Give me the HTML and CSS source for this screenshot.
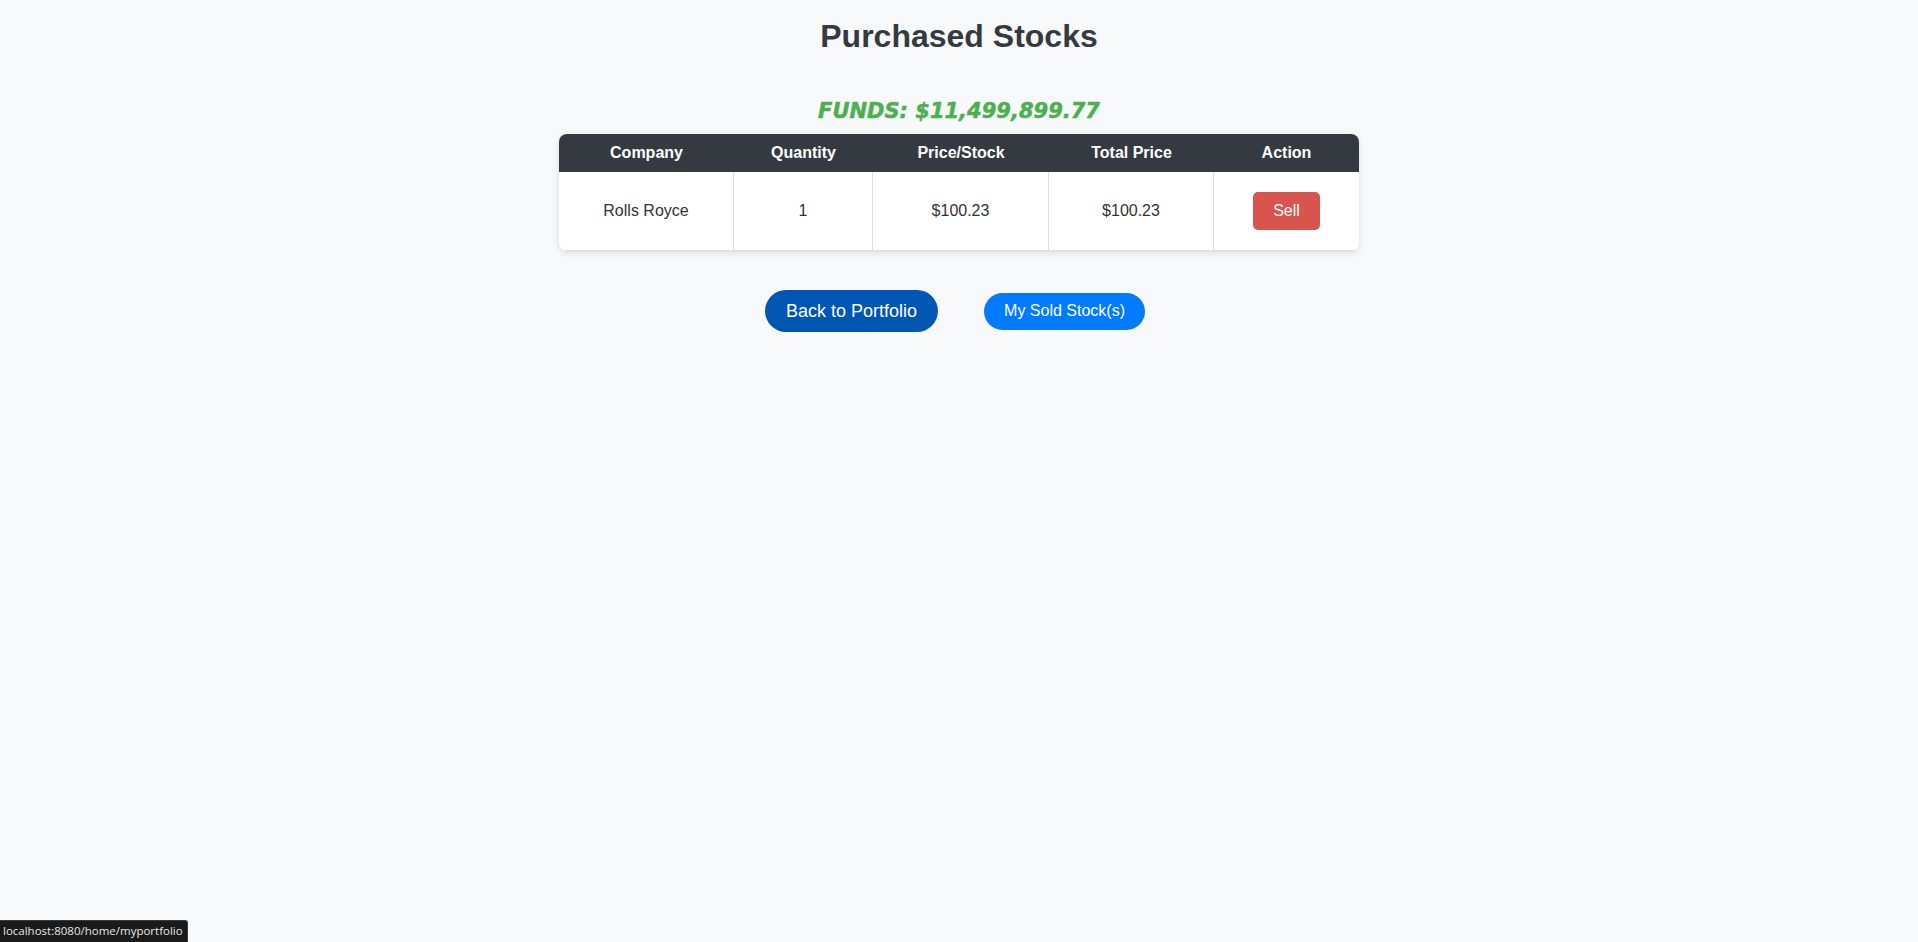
FILE: index.html
```html
<!DOCTYPE html>
<html lang="en">
<head>
<meta charset="utf-8">
<title>Purchased Stocks</title>
<link rel="stylesheet" href="styles.css">
</head>
<body>
<main class="page">
  <h1 class="title">Purchased Stocks</h1>
  <h2 class="funds">FUNDS: $11,499,899.77</h2>
  <table class="stocks">
    <colgroup>
      <col class="c1"><col class="c2"><col class="c3"><col class="c4"><col class="c5">
    </colgroup>
    <thead>
      <tr>
        <th>Company</th>
        <th>Quantity</th>
        <th>Price/Stock</th>
        <th>Total Price</th>
        <th>Action</th>
      </tr>
    </thead>
    <tbody>
      <tr>
        <td>Rolls Royce</td>
        <td>1</td>
        <td>$100.23</td>
        <td>$100.23</td>
        <td><button class="sell" type="button">Sell</button></td>
      </tr>
    </tbody>
  </table>
  <div class="actions">
    <a class="btn btn-back" href="#">Back to Portfolio</a>
    <a class="btn btn-sold" href="#">My Sold Stock(s)</a>
  </div>
</main>
<div class="status">localhost:8080/home/myportfolio</div>
</body>
</html>
```
FILE: styles.css
```css
html, body {
  margin: 0;
  padding: 0;
  background: #f8f9fa;
  color: #333;
  font-family: "Liberation Sans", Arial, sans-serif;
}

.page {
  display: flex;
  flex-direction: column;
  align-items: center;
  padding-top: 18px;
}

.title {
  margin: 0;
  font-size: 32px;
  font-weight: bold;
  line-height: 37px;
  color: #333a40;
}

.funds {
  margin: 44px 0 0;
  font-family: "DejaVu Sans", sans-serif;
  font-style: italic;
  font-weight: bold;
  font-size: 21px;
  line-height: 24px;
  color: #4caf50;
  -webkit-text-stroke: 0.5px #4caf50;
}

.stocks {
  margin-top: 11px;
  width: 800px;
  table-layout: fixed;
  border-collapse: separate;
  border-spacing: 0;
  background: #fff;
  border-radius: 8px;
  overflow: hidden;
  box-shadow: 0 2px 6px rgba(0, 0, 0, 0.12);
  font-size: 16px;
}

.c1 { width: 175px; }
.c2 { width: 139px; }
.c3 { width: 176px; }
.c4 { width: 165px; }
.c5 { width: 145px; }

.stocks th {
  background: #343a40;
  color: #fff;
  font-weight: bold;
  padding: 10px;
  line-height: 18px;
  text-align: center;
}

.stocks td {
  padding: 20px 10px;
  text-align: center;
  line-height: 18px;
  border-right: 1px solid #ddd;
  border-bottom: 1px solid #ddd;
  color: #333;
}

.stocks td:last-child {
  border-right: none;
}

.sell {
  background: #d9534f;
  color: #fff;
  border: none;
  border-radius: 5px;
  padding: 10px 20px;
  font-family: "Liberation Sans", Arial, sans-serif;
  font-size: 16px;
  line-height: 18px;
  vertical-align: middle;
}

.actions {
  margin-top: 39px;
  display: flex;
  align-items: center;
  gap: 46px;
  padding-right: 8px;
}

.btn {
  display: inline-block;
  color: #fff;
  text-decoration: none;
  border-radius: 22px;
}

.btn-back {
  background: #0056b3;
  font-size: 18px;
  line-height: 20px;
  padding: 11px 21px;
}

.btn-sold {
  background: #007bff;
  font-size: 16px;
  line-height: 18px;
  padding: 9.5px 20px;
}

.status {
  position: fixed;
  left: 0;
  bottom: 0;
  background: #1a1a1a;
  color: #e6e6e6;
  font-family: "Open Sans", "Noto Sans", sans-serif;
  font-size: 11.5px;
  line-height: 16px;
  padding: 2px 4px 3px 3px;
  border-top-right-radius: 3px;
  border: 1px solid #3a3a3a;
  border-left: none;
  border-bottom: none;
}
```
